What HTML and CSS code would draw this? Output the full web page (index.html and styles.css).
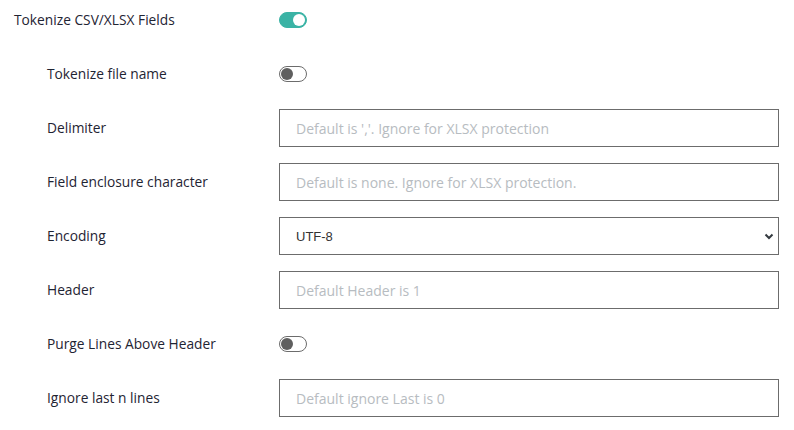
FILE: index.html
```html
<!DOCTYPE html>
<html lang="en">
<head>
<meta charset="utf-8">
<title>Tokenize CSV/XLSX Fields</title>
<link rel="stylesheet" href="styles.css">
</head>
<body>
<form class="settings">
  <div class="row">
    <label class="label">Tokenize CSV/XLSX Fields</label>
    <span class="switch on"><span class="knob"></span></span>
  </div>
  <div class="group">
    <div class="row">
      <label class="label">Tokenize file name</label>
      <span class="switch"><span class="knob"></span></span>
    </div>
    <div class="row">
      <label class="label">Delimiter</label>
      <input class="field" type="text" placeholder="Default is ','. Ignore for XLSX protection">
    </div>
    <div class="row">
      <label class="label">Field enclosure character</label>
      <input class="field" type="text" placeholder="Default is none. Ignore for XLSX protection.">
    </div>
    <div class="row">
      <label class="label">Encoding</label>
      <div class="select-wrap">
        <select class="field select"><option>UTF-8</option></select>
        <svg class="chev" width="10" height="7" viewBox="0 0 10 7"><path d="M1.5 1.5 L5 5 L8.5 1.5" fill="none" stroke="#343a40" stroke-width="2"/></svg>
      </div>
    </div>
    <div class="row">
      <label class="label">Header</label>
      <input class="field" type="text" placeholder="Default Header is 1">
    </div>
    <div class="row">
      <label class="label">Purge Lines Above Header</label>
      <span class="switch"><span class="knob"></span></span>
    </div>
    <div class="row">
      <label class="label">Ignore last n lines</label>
      <input class="field" type="text" placeholder="Default ignore Last is 0">
    </div>
  </div>
</form>
</body>
</html>
```

FILE: styles.css
```css
* { box-sizing: border-box; }
html, body { margin: 0; background: #ffffff; }
body {
  font-family: "Open Sans", "Noto Sans", sans-serif;
  font-size: 13.75px;
  color: #1f2433;
}
.settings {
  display: flex;
  flex-direction: column;
  gap: 16px;
  padding: 1px 0 0 14px;
  width: 779px;
}
.group {
  display: flex;
  flex-direction: column;
  gap: 16px;
  padding-left: 33px;
}
.row {
  display: flex;
  align-items: center;
  height: 38px;
}
.label {
  flex: 0 0 auto;
  width: 265px;
  font-size: 13.75px;
  line-height: 20px;
}
.group .label { width: 232px; }
.switch {
  position: relative;
  width: 28px;
  height: 16px;
  border-radius: 8px;
  border: 1px solid #6c6c6c;
  background: #fff;
}
.switch .knob {
  position: absolute;
  top: 1px;
  left: 1px;
  width: 12px;
  height: 12px;
  border-radius: 50%;
  background: #5f5f5f;
}
.switch.on {
  background: #3ab3a5;
  border-color: #3ab3a5;
}
.switch.on .knob {
  left: auto;
  right: 1px;
  background: #fff;
}
.field {
  flex: 1 1 auto;
  height: 38px;
  border: 1px solid #6c6c6c;
  border-radius: 0;
  padding: 0 16px;
  font-family: "Open Sans", "Noto Sans", sans-serif;
  font-size: 14px;
  color: #333;
  background: #fff;
  outline: none;
}
.field::placeholder { color: #b7bcc1; }
.select-wrap {
  flex: 1 1 auto;
  position: relative;
  display: flex;
}
.select {
  appearance: none;
  -webkit-appearance: none;
  width: 100%;
  font-family: "Liberation Sans", Arial, sans-serif;
  font-size: 13px;
  color: #333;
}
.chev {
  position: absolute;
  right: 5px;
  top: 16px;
  pointer-events: none;
}
```
